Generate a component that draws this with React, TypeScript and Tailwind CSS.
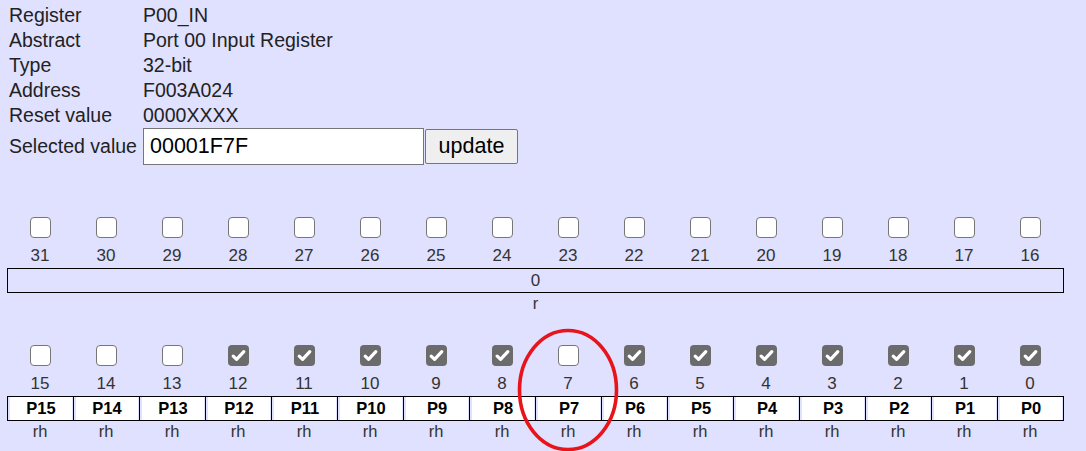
import React from "react";

const VALUE = 0x00001f7f;

const info: [string, string][] = [
  ["Register", "P00_IN"],
  ["Abstract", "Port 00 Input Register"],
  ["Type", "32-bit"],
  ["Address", "F003A024"],
  ["Reset value", "0000XXXX"],
];

function Check({ checked }: { checked: boolean }) {
  if (checked) {
    return (
      <span className="w-[21px] h-[21px] rounded-[4px] bg-[#6b6b6b] flex items-center justify-center">
        <svg width="17" height="17" viewBox="0 0 16 16" fill="none" stroke="#fff" strokeWidth="3" strokeLinecap="round" strokeLinejoin="round">
          <path d="M3 8.6l3.2 3.1 6.8-7.4" />
        </svg>
      </span>
    );
  }
  return <span className="w-[21px] h-[21px] rounded-[4px] border border-[#767676] bg-white block" />;
}

function BitGroup({ from, children, access }: { from: number; children: React.ReactNode; access: React.ReactNode }) {
  const bits = Array.from({ length: 16 }, (_, i) => from - i);
  return (
    <div className="w-[1057px] ml-[7px]">
      <div className="flex">
        {bits.map((b) => (
          <div key={b} className="w-[66px] flex flex-col items-center">
            <Check checked={((VALUE >> b) & 1) === 1} />
            <div className="mt-[7px] h-[21px] leading-[21px] text-[17px] text-[#333]">{b}</div>
          </div>
        ))}
      </div>
      <div className="mt-[2px] h-[25px] border border-black flex">{children}</div>
      <div className="h-[21px] flex text-[16.5px] leading-[21px] text-[#333]">{access}</div>
    </div>
  );
}

export default function App() {
  const low = Array.from({ length: 16 }, (_, i) => 15 - i);
  return (
    <div className="relative w-[1086px] h-[451px] bg-[#e0e0ff] text-[#222] overflow-hidden" style={{ fontFamily: '"Liberation Sans", Arial, sans-serif' }}>
      <div className="pt-[3px] pl-[9px] text-[19.5px]">
        {info.map(([k, v]) => (
          <div key={k} className="flex h-[25px] leading-[25px]">
            <div className="w-[134px]">{k}</div>
            <div>{v}</div>
          </div>
        ))}
        <div className="flex items-center h-[37px]">
          <div className="w-[134px]">Selected value</div>
          <input
            readOnly
            value="00001F7F"
            className="w-[281px] h-[37px] bg-white border border-[#767676] px-[6px] text-[21.5px] text-black outline-none"
          />
          <button className="w-[93px] h-[35px] ml-[1px] bg-[#efefef] border border-[#767676] rounded-[2px] text-[21.5px] text-black">
            update
          </button>
        </div>
      </div>

      <div className="mt-[52px]">
        <BitGroup from={31} access={<div className="w-full text-center">r</div>}>
          <div className="w-full text-center text-[17px] leading-[23px] text-[#333]">0</div>
        </BitGroup>
      </div>

      <div className="mt-[31px]">
        <BitGroup
          from={15}
          access={low.map((b) => (
            <div key={b} className="w-[66px] text-center">rh</div>
          ))}
        >
          {low.map((b, i) => (
            <div key={b} className={`${i < 15 ? "w-[66px] border-r border-black" : "w-[65px]"} pl-[2px] pr-[1px]`}>
              <div className="h-full bg-white text-center font-bold text-[16.5px] leading-[23px] text-black">P{b}</div>
            </div>
          ))}
        </BitGroup>
      </div>

      {/* highlight around bit 7 */}
      <svg className="absolute left-[517px] top-[328px]" width="102" height="124" viewBox="0 0 102 124">
        <ellipse cx="51" cy="62" rx="48.5" ry="59.5" fill="none" stroke="#e8141c" strokeWidth="3.6" />
      </svg>
    </div>
  );
}
